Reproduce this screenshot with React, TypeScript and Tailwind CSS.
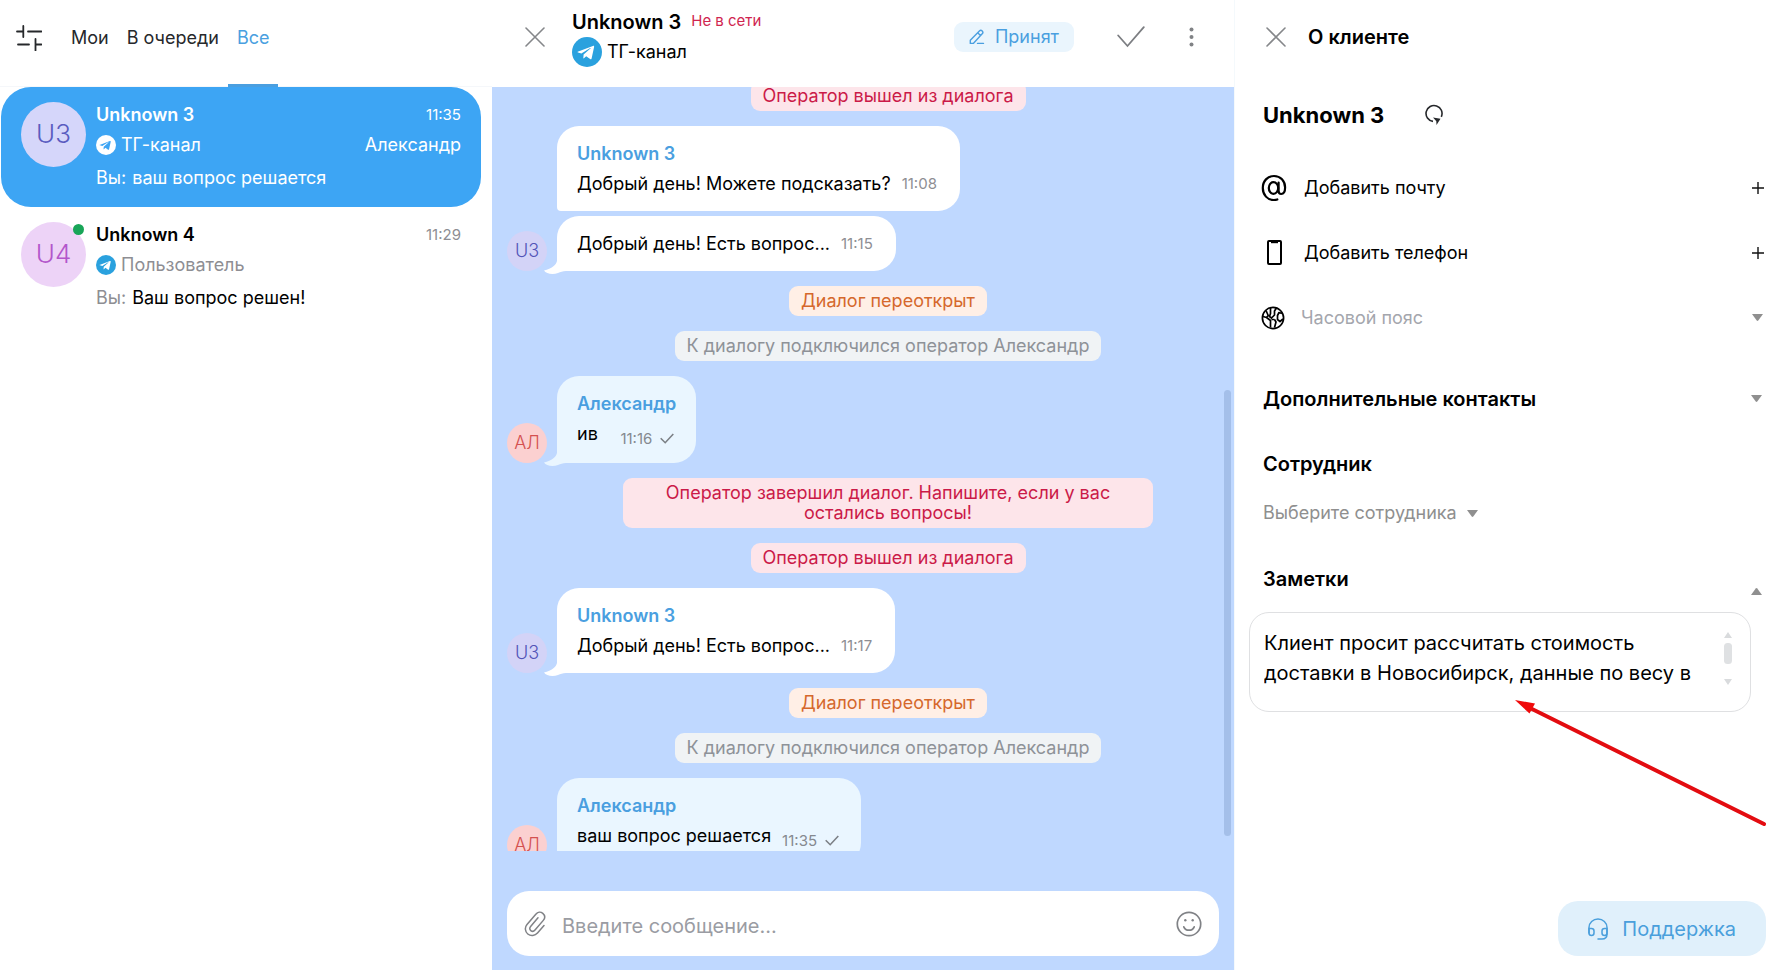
import type { ReactNode } from "react";

interface Chat {
  id: string;
  initials: string;
  name: string;
  time: string;
  channel: string;
  operator?: string;
  lastMessage: string;
  active?: boolean;
  online?: boolean;
}

type FeedItem =
  | { kind: "event"; tone: "red" | "orange" | "gray"; text: string }
  | {
      kind: "message";
      from: "client" | "operator";
      author?: string;
      text: string;
      time: string;
      grouped?: boolean;
    };

const chats: Chat[] = [
  {
    id: "u3",
    initials: "U3",
    name: "Unknown 3",
    time: "11:35",
    channel: "ТГ-канал",
    operator: "Александр",
    lastMessage: "ваш вопрос решается",
    active: true,
  },
  {
    id: "u4",
    initials: "U4",
    name: "Unknown 4",
    time: "11:29",
    channel: "Пользователь",
    lastMessage: "Ваш вопрос решен!",
    online: true,
  },
];

const feed: FeedItem[] = [
  { kind: "event", tone: "red", text: "Оператор вышел из диалога" },
  { kind: "message", from: "client", author: "Unknown 3", text: "Добрый день! Можете подсказать?", time: "11:08", grouped: true },
  { kind: "message", from: "client", text: "Добрый день! Есть вопрос...", time: "11:15" },
  { kind: "event", tone: "orange", text: "Диалог переоткрыт" },
  { kind: "event", tone: "gray", text: "К диалогу подключился оператор Александр" },
  { kind: "message", from: "operator", author: "Александр", text: "ив", time: "11:16" },
  { kind: "event", tone: "red", text: "Оператор завершил диалог. Напишите, если у вас остались вопросы!" },
  { kind: "event", tone: "red", text: "Оператор вышел из диалога" },
  { kind: "message", from: "client", author: "Unknown 3", text: "Добрый день! Есть вопрос...", time: "11:17" },
  { kind: "event", tone: "orange", text: "Диалог переоткрыт" },
  { kind: "event", tone: "gray", text: "К диалогу подключился оператор Александр" },
  { kind: "message", from: "operator", author: "Александр", text: "ваш вопрос решается", time: "11:35" },
];

const eventTones = {
  red: "bg-[#fde5ea] text-[#cb1a48]",
  orange: "bg-[#ffefe6] text-[#d5682c]",
  gray: "bg-[#f0f3f5] text-[#8e9298]",
};

function TelegramIcon({ className, disc = "#2aa1de", plane = "#ffffff" }: { className: string; disc?: string; plane?: string }) {
  return (
    <svg viewBox="0 0 30 30" className={className} aria-hidden="true">
      <circle cx="15" cy="15" r="15" fill={disc} />
      <path d="M6.3 14.6 20.9 8.9c.8-.3 1.4.2 1.2 1.2l-2.5 11.3c-.2.9-.8 1.1-1.5.7l-3.9-2.9-2 1.9c-.3.3-.5.4-.9.4l.3-3.9 7.1-6.4c.3-.3-.1-.4-.5-.2l-8.8 5.5-3.3-1c-.9-.3-.9-.8.2-.9z" fill={plane} />
    </svg>
  );
}

function CloseIcon() {
  return (
    <svg viewBox="0 0 20 20" className="size-5" fill="none" stroke="#85878a" strokeWidth="1.6" strokeLinecap="round" aria-hidden="true">
      <path d="M1 1l18 18M19 1 1 19" />
    </svg>
  );
}

function Caret({ up = false }: { up?: boolean }) {
  return (
    <svg viewBox="0 0 10 7" className="h-[7px] w-[11px] shrink-0" preserveAspectRatio="none" fill="#8f8f8f" aria-hidden="true">
      {up ? <path d="M0 7h10L5.700.5q-.7-.8-1.400 0z" /> : <path d="M0 0h10L5.700 6.500q-.7.8-1.400 0z" />}
    </svg>
  );
}

function PlusIcon() {
  return (
    <svg viewBox="0 0 12 12" className="size-3" fill="none" stroke="#111" strokeWidth="1.400" aria-hidden="true">
      <path d="M6 0v12M0 6h12" />
    </svg>
  );
}

function ChatListItem({ chat }: { chat: Chat }) {
  const muted = chat.active ? "text-white" : "text-[#8e8e93]";
  return (
    <li>
      <button
        type="button"
        className={`flex h-[120px] w-full gap-[10px] rounded-[30px] px-5 pt-[15px] text-left text-lg ${
          chat.active ? "bg-[#3da5f4] text-white" : "text-black"
        }`}
      >
        <span className="relative shrink-0">
          <span
            className={`flex size-[65px] items-center justify-center rounded-full text-[26px] font-light ${
              chat.active ? "bg-[#d5d6fa] text-[#5a5cc0]" : "bg-[#edd3f7] text-[#b356cb]"
            }`}
          >
            {chat.initials}
          </span>
          {chat.online && <span className="absolute top-0.5 right-0.5 size-[11px] rounded-full bg-[#18a558]" />}
        </span>
        <span className="min-w-0 flex-1">
          <span className="flex h-[26px] items-center justify-between">
            <b className="font-semibold">{chat.name}</b>
            <span className={`text-[15px] ${muted}`}>{chat.time}</span>
          </span>
          <span className={`flex h-[34px] items-center justify-between ${muted}`}>
            <span className="flex items-center gap-[5px]">
              {chat.active ? (
                <TelegramIcon className="size-5" disc="#ffffff" plane="#3da5f4" />
              ) : (
                <TelegramIcon className="size-5" />
              )}
              {chat.channel}
            </span>
            <span>{chat.operator}</span>
          </span>
          <span className="flex h-8 items-center gap-1.5">
            <span className={muted}>Вы:</span>
            <span className="truncate">{chat.lastMessage}</span>
          </span>
        </span>
      </button>
    </li>
  );
}

function Message({ item }: { item: Extract<FeedItem, { kind: "message" }> }) {
  const operator = item.from === "operator";
  return (
    <div className={`flex items-end gap-[10px] ${item.grouped ? "mb-[5px]" : "mb-[15px]"}`}>
      {item.grouped ? (
        <span className="size-10 shrink-0" />
      ) : (
        <span
          className={`flex size-10 shrink-0 items-center justify-center rounded-full text-lg font-light ${
            operator ? "bg-[#fbd0d0] text-[#d45050]" : "bg-[#d3d3f7] text-[#5254b8]"
          }`}
        >
          {operator ? "АЛ" : "U3"}
        </span>
      )}
      <div
        className={`relative rounded-[22px] pt-[13px] pr-5 pb-3 pl-5 text-lg leading-[30px] ${
          operator ? "bg-[#eaf6ff]" : "bg-white"
        } ${item.grouped ? "rounded-bl-[4px]" : "rounded-bl-none"}`}
      >
        {!item.grouped && (
          <svg
            viewBox="0 0 22 22"
            className="absolute -bottom-[5px] -left-[13px] size-[22px]"
            fill={operator ? "#eaf6ff" : "#ffffff"}
            aria-hidden="true"
          >
            <path d="M13 0v7c-1 4-5 7.500-13 9.500 2 3.500 9 4.500 14 2.500 2.500-1 4.500-2 8-2V0z" />
          </svg>
        )}
        {item.author && <div className="font-semibold text-[#4a9fe0]">{item.author}</div>}
        <div className="flex justify-between gap-[11px]">
          <span>{item.text}</span>
          {operator ? (
            <span className="flex h-8 items-end gap-2 pr-0.5 text-[15px] leading-6 text-[#85898f]">
              {item.time}
              <svg viewBox="0 0 14 11" className="mb-[7px] h-[11px] w-[14px]" fill="none" stroke="#7c8086" strokeWidth="1.600" aria-hidden="true">
                <path d="M.7 5.200 5.200 9.700 13.300 1" />
              </svg>
            </span>
          ) : (
            <span className="pr-[3px] text-[15px] text-[#8e8e93]">{item.time}</span>
          )}
        </div>
      </div>
    </div>
  );
}

function ContactRow({ icon, label }: { icon: ReactNode; label: string }) {
  return (
    <button type="button" className="flex h-[65px] w-full items-center pr-5 pl-[26px] text-left text-lg">
      <span className="flex w-7 justify-center">{icon}</span>
      <span className="ml-4 flex-1">{label}</span>
      <PlusIcon />
    </button>
  );
}

function Sidebar() {
  return (
    <aside className="flex w-[492px] shrink-0 flex-col">
      <header className="flex h-[87px] pl-4 shadow-[inset_0_-1px_0_#f5f7fa]">
        <button type="button" aria-label="Фильтры" className="mr-5 flex items-center pb-3">
          <svg viewBox="0 0 26 26" className="size-[26px]" fill="none" stroke="#26282b" strokeWidth="1.8" strokeLinecap="round" aria-hidden="true">
            <path d="M1 6.500h6M7.300 1v11M12 6.500h13.500M2 19.500h11M19.500 14v11.500M19.500 19.500h6" />
          </svg>
        </button>
        <nav className="flex text-lg text-[#26282b]">
          <button type="button" className="px-[9px] pb-3">Мои</button>
          <button type="button" className="px-[9px] pb-3">В очереди</button>
          <button type="button" className="border-b-[3px] border-[#4a9fe0] px-[9px] pb-[9px] text-[#4a9fe0]">
            Все
          </button>
        </nav>
      </header>
      <ul className="pr-[11px] pl-px">
        {chats.map((chat) => (
          <ChatListItem key={chat.id} chat={chat} />
        ))}
      </ul>
    </aside>
  );
}

function Conversation() {
  return (
    <main className="flex min-w-0 flex-1 flex-col bg-[#bfd8ff]">
      <header className="flex h-[87px] shrink-0 items-center bg-white pr-10 pb-[14px] pl-[33px]">
        <button type="button" aria-label="Закрыть диалог">
          <CloseIcon />
        </button>
        <div className="ml-[27px] flex-1">
          <div className="flex items-center gap-[10px]">
            <h1 className="text-xl leading-[30px] font-semibold">Unknown 3</h1>
            <span className="text-[15px] text-[#d0254f]">Не в сети</span>
          </div>
          <div className="flex items-center gap-[5px] text-lg">
            <TelegramIcon className="size-[30px]" />
            ТГ-канал
          </div>
        </div>
        <button type="button" className="flex h-[30px] items-center gap-[10px] rounded-[9px] bg-[#eaf5fd] px-[15px] text-lg text-[#4a9fe0]">
          <svg viewBox="0 0 16 16" className="size-4" fill="none" stroke="currentColor" strokeWidth="1.400" strokeLinejoin="round" strokeLinecap="round" aria-hidden="true">
            <path d="M1.300 14.400v-3.200L10.400 2q1.400-1.300 2.800 0 1.400 1.400 0 2.800L4.300 14.400zM8.700 3.800l2.800 2.800M8.500 14.400h6" />
          </svg>
          Принят
        </button>
        <button type="button" aria-label="Завершить" className="ml-[43px]">
          <svg viewBox="0 0 28 22" className="h-[22px] w-7" fill="none" stroke="#7c7e82" strokeWidth="1.800" strokeLinecap="round" aria-hidden="true">
            <path d="M1.200 9.500 10.500 20 26.800 1.200" />
          </svg>
        </button>
        <button type="button" aria-label="Меню" className="ml-11">
          <svg viewBox="0 0 5 20" className="h-5 w-[5px]" fill="#808285" aria-hidden="true">
            <circle cx="2.500" cy="2.500" r="2" />
            <circle cx="2.500" cy="10" r="2" />
            <circle cx="2.500" cy="17.500" r="2" />
          </svg>
        </button>
      </header>

      <section className="relative min-h-0 flex-1 overflow-hidden px-[15px]">
        <div className="-mt-1.5">
          {feed.map((item, i) =>
            item.kind === "event" ? (
              <div key={i} className="mb-[15px] flex justify-center pl-[50px]">
                <p className={`max-w-[80%] rounded-[9px] px-3 py-[5px] text-center text-lg leading-5 ${eventTones[item.tone]}`}>
                  {item.text}
                </p>
              </div>
            ) : (
              <Message key={i} item={item} />
            ),
          )}
        </div>
        <div className="absolute top-[303px] right-[3px] bottom-[15px] w-[7px] rounded-full bg-[#a4bfe9]" />
      </section>

      <form className="mx-[15px] mt-10 mb-[14px] flex h-[65px] shrink-0 items-center rounded-[22px] bg-white px-[17px]">
        <button type="button" aria-label="Прикрепить файл">
          <svg viewBox="0 0 22 26" className="h-[26px] w-[22px]" fill="none" stroke="#808286" strokeWidth="1.500" strokeLinecap="round" aria-hidden="true">
            <path d="M20 14.500 13.500 22C11 24.800 6.800 25.500 3.800 23 .8 20.400.6 16.300 3 13.400L11.800 3.200c1.900-2.200 4.800-2.600 7-.8 2.200 1.900 2.300 4.800.5 7L11 19.100c-1.200 1.400-2.900 1.600-4.200.5-1.300-1.100-1.400-2.800-.2-4.200L14 6.700" />
          </svg>
        </button>
        <input
          aria-label="Введите сообщение"
          placeholder="Введите сообщение..."
          className="ml-4 min-w-0 flex-1 pt-1 text-xl outline-none placeholder:text-[#9a9ca3]"
        />
        <button type="button" aria-label="Эмодзи">
          <svg viewBox="0 0 26 26" className="size-[26px]" fill="none" stroke="#808286" strokeWidth="1.700" strokeLinecap="round" aria-hidden="true">
            <circle cx="13" cy="13" r="11.700" />
            <path d="M7.800 15.800c1 2.400 2.900 3.400 5.200 3.400s4.200-1 5.200-3.400" />
            <circle cx="9.300" cy="9.300" r="1.200" fill="#808286" stroke="none" />
            <circle cx="16.700" cy="9.300" r="1.200" fill="#808286" stroke="none" />
          </svg>
        </button>
      </form>
    </main>
  );
}

function ClientPanel() {
  return (
    <aside className="flex w-[550px] shrink-0 flex-col shadow-[inset_1px_0_0_#f4f9fc]">
      <header className="flex h-[87px] shrink-0 items-center gap-[22px] pb-[14px] pl-8">
        <button type="button" aria-label="Закрыть панель">
          <CloseIcon />
        </button>
        <h2 className="text-xl font-semibold">О клиенте</h2>
      </header>

      <div className="mb-3 flex h-14 items-center gap-10 pl-[29px]">
        <h3 className="text-[22px] font-bold">Unknown 3</h3>
        <button type="button" aria-label="Обновить">
          <svg viewBox="0 0 20 22" className="h-[22px] w-5" fill="none" stroke="#26282b" strokeWidth="1.600" aria-hidden="true">
            <path d="M17.300 12.800A8 8 0 1 0 9 17.400" />
            <path d="M9 13.600l7.500 1.200-4 6.200-.2-3.800z" fill="#26282b" stroke="none" />
          </svg>
        </button>
      </div>

      <ContactRow
        label="Добавить почту"
        icon={
          <svg viewBox="0 0 26 28" className="h-7 w-[26px]" fill="none" stroke="#000" strokeWidth="2.200" strokeLinecap="round" aria-hidden="true">
            <ellipse cx="12.500" cy="14" rx="4.700" ry="5.800" />
            <path d="M17.600 8.500v8.200c0 2.200 1 3.300 2.600 3.300 2.500 0 3.900-2.700 3.900-6.400C24.100 6.800 19.500 2 13 2S1.800 7 1.800 14 6.500 26 12.800 26c1.300 0 2.400-.1 3.500-.5" />
          </svg>
        }
      />
      <ContactRow
        label="Добавить телефон"
        icon={
          <svg viewBox="0 0 15 25" className="h-[25px] w-[15px]" fill="none" stroke="#000" strokeWidth="2" aria-hidden="true">
            <rect x="1" y="1" width="13" height="23" rx="1" />
            <path d="M4 2.200h7" />
          </svg>
        }
      />
      <div className="relative flex h-[65px] items-center pr-[21px] pl-[27px]">
        <svg viewBox="0 0 24 24" className="size-6" fill="none" stroke="#000" strokeWidth="1.700" strokeLinejoin="round" aria-hidden="true">
          <circle cx="12" cy="12" r="10.600" />
          <path d="M5 4.500 7.200 9.500 5.500 11.500 2 10.500M5.500 11.500 9.500 14.500V21.500M9.500 2v5.500l-1 3 2 1.500 3-3V5l2-3M13.500 13.500h-3M13.500 13.500l1.500 2.500-1.500 5.500M21 7.500l-3-1-1.500 3v4l2.500 2 3-2.500" />
        </svg>
        <label htmlFor="timezone" className="sr-only">Часовой пояс</label>
        <select id="timezone" className="ml-4 flex-1 appearance-none text-lg text-[#a4a6ad] outline-none">
          <option>Часовой пояс</option>
        </select>
        <Caret />
      </div>

      <button type="button" className="mt-4 flex h-[65px] items-center justify-between pr-[22px] pl-[29px]">
        <span className="text-xl font-semibold">Дополнительные контакты</span>
        <Caret />
      </button>

      <label htmlFor="employee" className="flex h-[65px] items-center pl-[29px] text-xl font-semibold">
        Сотрудник
      </label>
      <div className="flex h-[34px] items-center gap-[10px] pl-[29px]">
        <select id="employee" className="appearance-none text-lg text-[#8f8f8f] outline-none">
          <option>Выберите сотрудника</option>
        </select>
        <Caret />
      </div>

      <div className="mt-4 flex h-[65px] items-center justify-between pr-[22px] pl-[29px]">
        <label htmlFor="notes" className="text-xl font-semibold">Заметки</label>
        <button type="button" aria-label="Свернуть" className="self-end pb-4">
          <Caret up />
        </button>
      </div>
      <div className="relative mt-px mr-[33px] ml-[15px] flex h-[100px] shrink-0 rounded-[20px] border border-[#dfe0e2] pt-[15px] pr-[18px] pl-[14px]">
        <textarea
          id="notes"
          defaultValue="Клиент просит рассчитать стоимость доставки в Новосибирск, данные по весу в"
          className="h-[60px] min-w-0 flex-1 resize-none overflow-hidden pr-3 text-xl leading-[30px] outline-none"
        />
        <svg viewBox="0 0 8 53" className="mt-1 h-[53px] w-2" fill="#d9dbdd" aria-hidden="true">
          <path d="M0 6h8L4 0zM0 47h8l-4 6z" />
          <rect y="11" width="8" height="21" rx="3.500" fill="#dfe1e3" />
        </svg>
        <svg viewBox="0 0 256 130" className="pointer-events-none absolute top-[86px] left-[264px] h-[130px] w-64" aria-hidden="true">
          <path d="M14 8 250 125" stroke="#e30c10" strokeWidth="4" strokeLinecap="round" />
          <path d="M1 1 21 4.500 15.500 14.500z" fill="#f00a0a" />
        </svg>
      </div>

      <button
        type="button"
        className="mt-auto mr-[18px] mb-[14px] flex h-[55px] shrink-0 items-center gap-[14px] self-end rounded-[20px] bg-[#e0f0fb] px-[30px] text-xl text-[#4a9fdc]"
      >
        <svg viewBox="0 0 20 22" className="h-[22px] w-5" fill="none" stroke="currentColor" strokeWidth="1.500" strokeLinecap="round" strokeLinejoin="round" aria-hidden="true">
          <path d="M1 15V9.500a9 8.500 0 0 1 18 0V16q0 5-5 5h-4" />
          <path d="M1 10.500h2.500q2.500 0 2.500 2.500v2q0 2.500-2.500 2.500T1 15zM19 10.500h-2.500Q14 10.500 14 13v2q0 2.500 2.500 2.500T19 15z" />
        </svg>
        Поддержка
      </button>
    </aside>
  );
}

export default function App() {
  return (
    <div className="flex h-screen overflow-hidden bg-white font-[Inter,sans-serif] text-black">
      <Sidebar />
      <Conversation />
      <ClientPanel />
    </div>
  );
}
